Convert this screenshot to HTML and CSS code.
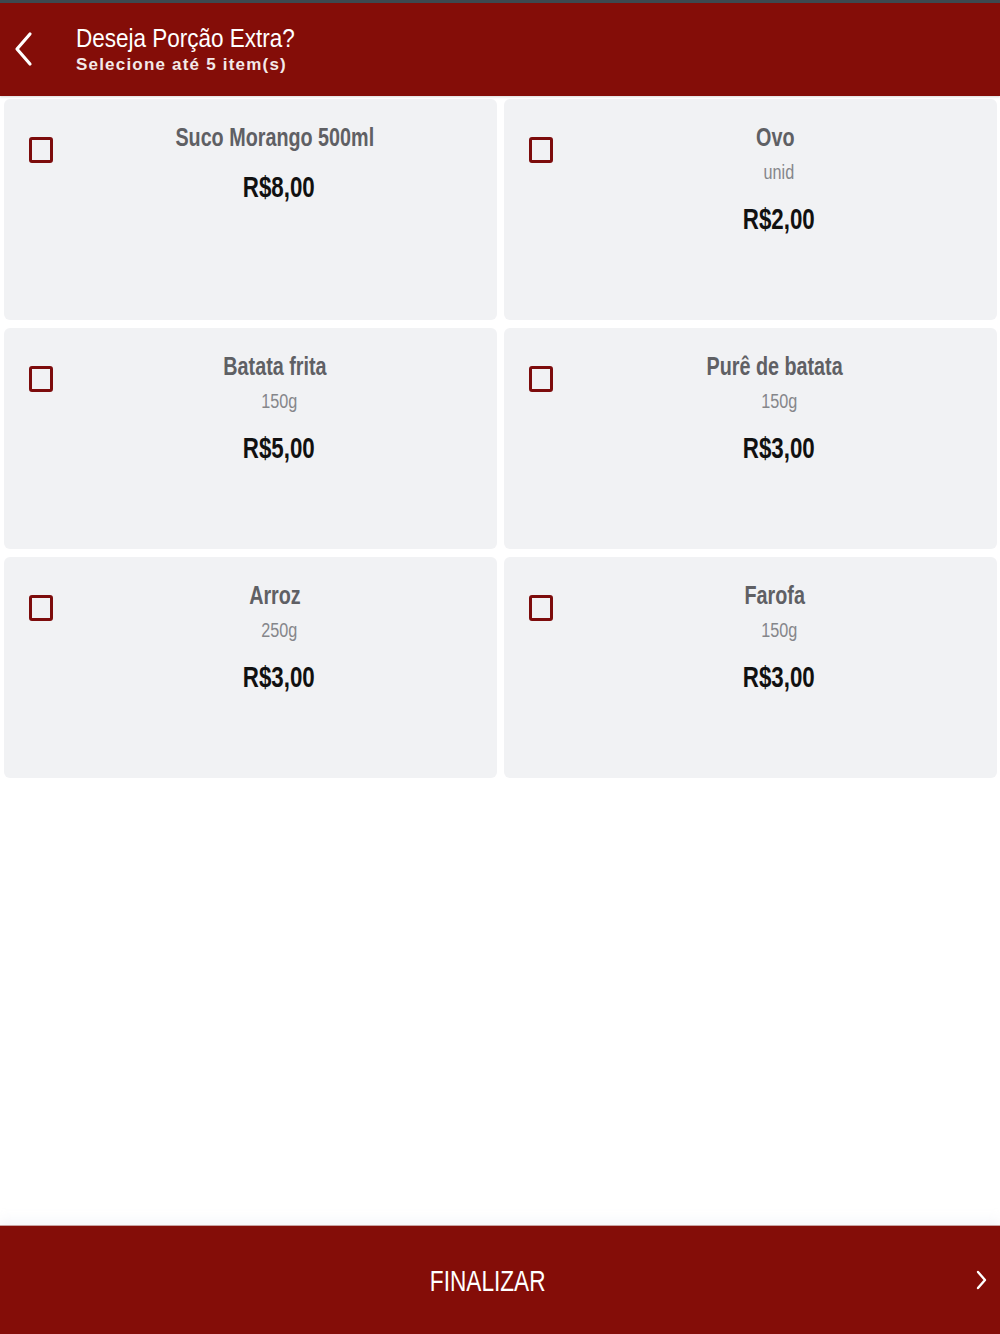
FILE: index.html
```html
<!DOCTYPE html>
<html lang="pt-BR">
<head>
    <meta charset="UTF-8">
    <meta name="viewport" content="width=device-width, initial-scale=1.0">
    <title>Deseja Porção Extra?</title>
    <link rel="stylesheet" href="styles.css">
</head>
<body>
<div class="page">
    <header class="topbar">
        <a class="back" href="#">
            <svg width="22" height="36" viewBox="0 0 22 36"><polyline points="18,3 5,18 18,33" fill="none" stroke="#fff" stroke-width="3.2" stroke-linecap="round" stroke-linejoin="round"/></svg>
        </a>
        <div class="titles">
            <h1>Deseja Porção Extra?</h1>
            <p>Selecione até 5 item(s)</p>
        </div>
    </header>

    <main class="options">
        <label class="card">
            <span class="box"></span>
            <span class="info">
                <span class="name">Suco Morango 500ml</span>
                <span class="price">R$8,00</span>
            </span>
        </label>
        <label class="card">
            <span class="box"></span>
            <span class="info">
                <span class="name">Ovo</span>
                <span class="desc">unid</span>
                <span class="price">R$2,00</span>
            </span>
        </label>
        <label class="card">
            <span class="box"></span>
            <span class="info">
                <span class="name">Batata frita</span>
                <span class="desc">150g</span>
                <span class="price">R$5,00</span>
            </span>
        </label>
        <label class="card">
            <span class="box"></span>
            <span class="info">
                <span class="name">Purê de batata</span>
                <span class="desc">150g</span>
                <span class="price">R$3,00</span>
            </span>
        </label>
        <label class="card">
            <span class="box"></span>
            <span class="info">
                <span class="name">Arroz</span>
                <span class="desc">250g</span>
                <span class="price">R$3,00</span>
            </span>
        </label>
        <label class="card">
            <span class="box"></span>
            <span class="info">
                <span class="name">Farofa</span>
                <span class="desc">150g</span>
                <span class="price">R$3,00</span>
            </span>
        </label>
    </main>

    <footer class="finish">
        <span class="finish-label">FINALIZAR</span>
        <svg class="finish-arrow" width="14" height="22" viewBox="0 0 14 22"><polyline points="4,3 11,11 4,19" fill="none" stroke="#fff" stroke-width="2.4" stroke-linecap="round" stroke-linejoin="round"/></svg>
    </footer>
</div>
</body>
</html>
```

FILE: styles.css
```css
body, html {
    margin: 0;
    height: 100%;
    font-family: "Liberation Sans", Arial, sans-serif;
    background: #fff;
}
.page {
    height: 1334px;
    display: flex;
    flex-direction: column;
}
.topbar {
    height: 93px;
    border-top: 3px solid #3d4950;
    background-color: #840d08;
    display: flex;
    align-items: center;
    color: #fff;
    box-shadow: 0 1px 2px rgba(0,0,0,0.15);
}
.back {
    width: 76px;
    display: flex;
    padding-left: 12px;
    box-sizing: border-box;
    margin-top: -2px;
}
.titles h1 {
    margin: 0;
    font-size: 25px;
    font-weight: normal;
    line-height: 28px;
    transform: scaleX(0.9);
    transform-origin: left center;
}
.titles p {
    margin: 2px 0 0;
    font-size: 17px;
    font-weight: bold;
    letter-spacing: 1.2px;
    line-height: 22px;
    color: #f3e9e9;
}
.options {
    flex: 1;
    display: grid;
    grid-template-columns: 1fr 1fr;
    grid-auto-rows: 221px;
    gap: 8px 7px;
    padding: 3px 3px 0 4px;
    align-content: start;
}
.card {
    background-color: #f1f2f4;
    border-radius: 6px;
    display: flex;
    padding: 23px 0 0 25px;
    cursor: pointer;
}
.box {
    width: 18px;
    height: 20px;
    margin-top: 15px;
    border: 3px solid #7d0c0c;
    border-radius: 3px;
    flex-shrink: 0;
}
/* the app uses a condensed face, squeeze the texts to match */
.info {
    flex: 1;
    display: flex;
    flex-direction: column;
    align-items: center;
    padding-left: 8px;
}
.name {
    font-size: 26px;
    line-height: 30px;
    font-weight: bold;
    color: #5f6064;
    margin-right: 8px;
    transform: scaleX(0.76);
}
.desc {
    margin-top: 8px;
    font-size: 20px;
    line-height: 24px;
    color: #85868a;
    transform: scaleX(0.81);
}
.price {
    margin-top: 18px;
    font-size: 29px;
    line-height: 34px;
    font-weight: bold;
    color: #111;
    transform: scaleX(0.77);
}
.finish {
    height: 108px;
    background-color: #840d08;
    border-top: 1px solid #c9a3a2;
    box-shadow: 0 -6px 10px rgba(220,225,235,0.25);
    display: flex;
    align-items: center;
    color: #fff;
}
.finish-label {
    flex: 1;
    text-align: center;
    padding-left: 12px;
    font-size: 29px;
    margin-top: 2px;
    transform: scaleX(0.78);
}
.finish-arrow {
    margin: 0 12px 0 8px;
}
```
